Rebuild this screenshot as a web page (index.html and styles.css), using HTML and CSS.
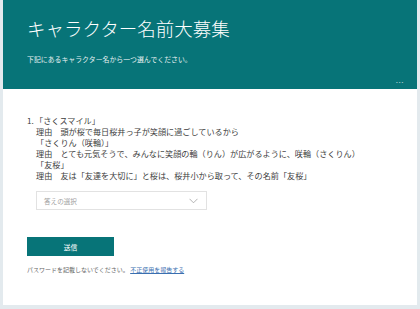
FILE: index.html
```html
<!DOCTYPE html>
<html lang="ja">
<head>
  <meta charset="utf-8">
  <link rel="stylesheet" href="styles.css">
  <title>キャラクター名前大募集</title>
</head>
<body>
  <div class="card">
    <div class="header">
      <h1 class="title">キャラクター名前大募集</h1>
      <p class="subtitle">下記にあるキャラクター名から一つ選んでください。</p>
      <div class="more">...</div>
    </div>
    <div class="content">
      <div class="question">
        <div class="qtext">
          <span class="num">1.</span>「さくスマイル」<br>
          <span class="indent">理由　頭が桜で毎日桜井っ子が笑顔に過ごしているから</span><br>
          <span class="indent">「さくりん（咲輪）」</span><br>
          <span class="indent">理由　とても元気そうで、みんなに笑顔の輪（りん）が広がるように、咲輪（さくりん）</span><br>
          <span class="indent">「友桜」</span><br>
          <span class="indent">理由　友は「友達を大切に」と桜は、桜井小から取って、その名前「友桜」</span>
        </div>
        <div class="select">
          <span>答えの選択</span>
          <svg width="9" height="6" viewBox="0 0 9 6"><path d="M0.5 0.8 L4.5 4.8 L8.5 0.8" fill="none" stroke="#a0a0a0" stroke-width="0.8"/></svg>
        </div>
      </div>
      <button class="submit">送信</button>
      <p class="note">パスワードを記載しないでください。 <a href="#">不正使用を報告する</a></p>
    </div>
  </div>
</body>
</html>
```
FILE: styles.css
```css
html, body {
  margin: 0;
  padding: 0;
}

body {
  background-color: #e3eaee;
  font-family: "Noto Sans CJK JP", "Noto Sans", sans-serif;
  height: 309px;
  overflow: hidden;
}

.card {
  margin: 0 3px;
  background-color: #ffffff;
  height: 305px;
}

.header {
  background-color: #077478;
  color: #ffffff;
  height: 89px;
  padding: 0 27px 0 24px;
  position: relative;
}

.title {
  margin: 0;
  padding-top: 15px;
  font-size: 18.5px;
  font-weight: 300;
  line-height: 26px;
}

.subtitle {
  margin: 13px 0 0 0;
  font-size: 6.9px;
  line-height: 10px;
  opacity: 0.9;
}

.more {
  position: absolute;
  right: 13px;
  bottom: 4px;
  font-size: 8px;
  letter-spacing: 0.5px;
  opacity: 0.7;
}

.content {
  padding: 26px 24px 0 24px;
}

.qtext {
  font-size: 8.15px;
  line-height: 11px;
  color: #3c3c3c;
}

.num {
  display: inline-block;
  width: 8px;
}

.indent {
  padding-left: 9px;
}

.select {
  margin: 10px 0 0 9px;
  height: 17px;
  border: 1px solid #e2e2e2;
  display: flex;
  align-items: center;
  justify-content: space-between;
  padding: 0 8px 0 7px;
  width: 154px;
  font-size: 6.6px;
  color: #a0a0a0;
}

.submit {
  display: block;
  margin-top: 27px;
  width: 87px;
  height: 19px;
  border: none;
  background-color: #077478;
  color: #ffffff;
  font-family: "Noto Sans CJK JP", sans-serif;
  font-size: 6.8px;
  padding: 0;
}

.note {
  margin: 9px 0 0 0;
  font-size: 6px;
  color: #666666;
}

.note a {
  color: #3a6fb0;
}
```
